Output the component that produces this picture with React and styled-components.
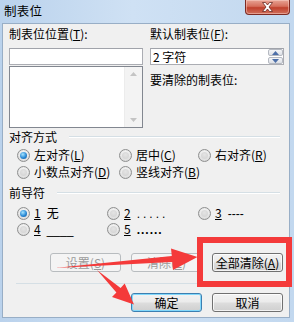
import React from 'react';
import styled, { createGlobalStyle } from 'styled-components';

const GlobalStyle = createGlobalStyle`
  html, body {
    margin: 0;
    padding: 0;
    background: #fff;
  }
`;

const Window = styled.div`
  position: relative;
  width: 294px;
  height: 322px;
  box-sizing: border-box;
  padding: 0 4px 4px 2px;
  display: flex;
  flex-direction: column;
  background: linear-gradient(90deg, #bad2ec 0%, #cfe1f4 45%, #c2d8ef 100%);
  font-family: "Noto Sans CJK SC", "Liberation Sans", sans-serif;
  font-size: 12px;
  color: #000;
  overflow: hidden;
`;

const TitleBar = styled.div`
  height: 23px;
  display: flex;
  justify-content: space-between;
  align-items: flex-start;
`;

const Title = styled.div`
  padding: 3px 0 0 2px;
  font-size: 12.5px;
  line-height: 16px;
  letter-spacing: 0.3px;
`;

const CloseButton = styled.div`
  width: 45px;
  height: 15px;
  box-sizing: border-box;
  border: 1px solid #7d2a22;
  border-top: none;
  border-radius: 0 0 4px 4px;
  background: linear-gradient(180deg, #e7a394 0%, #d66f5c 45%, #c0402c 55%, #d0705c 100%);
  box-shadow: inset 0 0 0 1px rgba(255, 220, 210, 0.45);
  display: flex;
  align-items: center;
  justify-content: center;
`;

const Body = styled.div`
  flex: 1;
  box-sizing: border-box;
  border: 1px solid #98aec6;
  background: #f0f0f0;
  padding: 3px 5px 0 6px;
  display: flex;
  flex-direction: column;
`;

const TopGrid = styled.div`
  display: grid;
  grid-template-columns: 134px 134px;
  column-gap: 7px;
`;

const Column = styled.div`
  display: flex;
  flex-direction: column;
`;

const Label = styled.div`
  height: 14px;
  line-height: 14px;
  white-space: nowrap;
  margin-top: ${(p) => p.$mt || 0}px;
`;

const Mn = styled.span`
  text-decoration: underline;
  text-underline-offset: 1px;
`;

const TextBox = styled.div`
  margin-top: 7px;
  height: 17px;
  box-sizing: border-box;
  border: 1px solid #abadb3;
  border-top-color: #a0a3aa;
  background: #fff;
  display: flex;
  align-items: center;
  padding-left: 2px;
  line-height: 15px;
`;

const SpinText = styled.div`
  flex: 1;
`;

const SpinButtons = styled.div`
  width: 15px;
  height: 15px;
  display: flex;
  flex-direction: column;
  gap: 1px;
`;

const SpinHalf = styled.div`
  flex: 1;
  border: 1px solid #b5b9c1;
  border-radius: 2px;
  background: linear-gradient(180deg, #f4f5f7, #dde0e6);
  display: flex;
  align-items: center;
  justify-content: center;
`;

const ListBox = styled.div`
  margin-top: 1px;
  height: 62px;
  box-sizing: border-box;
  border: 1px solid #828790;
  background: #fff;
  display: flex;
  justify-content: flex-end;
`;

const ScrollBar = styled.div`
  width: 17px;
  background: #f3f3f3;
  border-left: 1px solid #ececec;
  display: flex;
  flex-direction: column;
  justify-content: space-between;
  align-items: center;
  padding: 5px 0;
`;

const GroupHeader = styled.div`
  margin-top: ${(p) => p.$mt}px;
  height: 14px;
  line-height: 14px;
  display: flex;
  align-items: center;
  gap: 12px;
  padding-right: 4px;
`;

const GroupLine = styled.div`
  flex: 1;
  height: 1px;
  background: #d5dfe5;
  border-bottom: 1px solid #fff;
`;

const RadioGrid = styled.div`
  margin-top: ${(p) => p.$mt}px;
  padding-left: 8px;
  display: grid;
  grid-template-columns: ${(p) => p.$cols};
  grid-auto-rows: 14px;
  row-gap: ${(p) => p.$gap}px;
`;

const RadioItem = styled.div`
  display: flex;
  align-items: center;
  gap: 4px;
  white-space: nowrap;
  line-height: 14px;
`;

const RadioDot = styled.span`
  flex: none;
  width: 13px;
  height: 13px;
  box-sizing: border-box;
  border-radius: 50%;
  border: 1px solid #8e8f8f;
  background: radial-gradient(circle at 50% 40%, #ffffff 0%, #ececec 45%, #c9c9c9 100%);
  display: flex;
  align-items: center;
  justify-content: center;

  &::after {
    content: '';
    width: 7px;
    height: 7px;
    border-radius: 50%;
    background: ${(p) =>
      p.$checked
        ? 'radial-gradient(circle at 40% 35%, #a6e4ff 0%, #2a8ad6 55%, #0c4f93 100%)'
        : 'radial-gradient(circle at 50% 40%, #e4e4e4, #d0d0d0)'};
  }
`;

const Leader = styled.span`
  margin-left: 6px;
  font-family: "Liberation Sans", sans-serif;
  letter-spacing: ${(p) => p.$ls || 0}px;
  font-weight: ${(p) => (p.$bold ? 700 : 400)};
`;

const LeaderCjk = styled.span`
  margin-left: 6px;
`;

const ButtonRow = styled.div`
  margin-top: ${(p) => p.$mt}px;
  display: flex;
  justify-content: flex-end;
  gap: 10px;
  padding-right: 1px;
`;

const Button = styled.button`
  width: 71px;
  height: 19px;
  box-sizing: border-box;
  padding: 0;
  border-radius: 3px;
  font-family: "Noto Sans CJK SC", "Liberation Sans", sans-serif;
  font-size: 12px;
  line-height: 15px;
  color: ${(p) => (p.disabled ? '#9a9a9a' : '#000')};
  border: 1px solid ${(p) => (p.disabled ? '#b8bcbf' : p.$default ? '#3c7fb1' : '#707070')};
  background: ${(p) =>
    p.disabled
      ? '#f4f4f4'
      : 'linear-gradient(180deg, #f2f2f2 0%, #ebebeb 48%, #dddddd 52%, #cfcfcf 100%)'};
  box-shadow: ${(p) =>
    p.$default ? 'inset 0 0 0 1px #82d8fb' : p.disabled ? 'none' : 'inset 0 0 0 1px rgba(255,255,255,0.75)'};
`;

const Separator = styled.div`
  margin: 11px -5px 0 7px;
  height: 1px;
  background: #d5dfe5;
`;

const RedBox = styled.div`
  position: absolute;
  left: 197px;
  top: 237px;
  width: 95px;
  height: 50px;
  box-sizing: border-box;
  border: 6px solid #f43a3a;
  pointer-events: none;
`;

const Arrows = styled.svg`
  position: absolute;
  left: 0;
  top: 0;
  pointer-events: none;
`;

const Tri = ({ up }) => (
  <svg width="7" height="4" viewBox="0 0 7 4">
    <path d={up ? 'M0 4 L3.5 0 L7 4 Z' : 'M0 0 L3.5 4 L7 0 Z'} fill="#c4c4c4" />
  </svg>
);

const SpinTri = ({ up }) => (
  <svg width="7" height="4" viewBox="0 0 7 4">
    <path d={up ? 'M0 4 L3.5 0 L7 4 Z' : 'M0 0 L3.5 4 L7 0 Z'} fill="#4d6fa8" />
  </svg>
);

const Radio = ({ checked, children }) => (
  <RadioItem>
    <RadioDot $checked={checked} />
    <span>{children}</span>
  </RadioItem>
);

export default function App() {
  return (
    <>
      <GlobalStyle />
      <Window>
        <TitleBar>
          <Title>制表位</Title>
          <CloseButton>
            <svg width="13" height="10" viewBox="0 0 13 10">
              <path
                d="M1.5 0.5 L4.5 0.5 L6.5 3 L8.5 0.5 L11.5 0.5 L8 5 L11.5 9.5 L8.5 9.5 L6.5 7 L4.5 9.5 L1.5 9.5 L5 5 Z"
                fill="#fff"
                stroke="#6b2a22"
                strokeWidth="0.8"
              />
            </svg>
          </CloseButton>
        </TitleBar>
        <Body>
          <TopGrid>
            <Column>
              <Label>
                制表位位置(<Mn>T</Mn>):
              </Label>
              <TextBox />
              <ListBox>
                <ScrollBar>
                  <Tri up />
                  <Tri />
                </ScrollBar>
              </ListBox>
            </Column>
            <Column>
              <Label>
                默认制表位(<Mn>F</Mn>):
              </Label>
              <TextBox>
                <SpinText>2 字符</SpinText>
                <SpinButtons>
                  <SpinHalf>
                    <SpinTri up />
                  </SpinHalf>
                  <SpinHalf>
                    <SpinTri />
                  </SpinHalf>
                </SpinButtons>
              </TextBox>
              <Label $mt={8}>要清除的制表位:</Label>
            </Column>
          </TopGrid>

          <GroupHeader $mt={2}>
            <span>对齐方式</span>
            <GroupLine />
          </GroupHeader>
          <RadioGrid $mt={4} $gap={3} $cols="102px 79px auto">
            <Radio checked>
              左对齐(<Mn>L</Mn>)
            </Radio>
            <Radio>
              居中(<Mn>C</Mn>)
            </Radio>
            <Radio>
              右对齐(<Mn>R</Mn>)
            </Radio>
            <Radio>
              小数点对齐(<Mn>D</Mn>)
            </Radio>
            <Radio>
              竖线对齐(<Mn>B</Mn>)
            </Radio>
          </RadioGrid>

          <GroupHeader $mt={7}>
            <span>前导符</span>
            <GroupLine />
          </GroupHeader>
          <RadioGrid $mt={6} $gap={2} $cols="90px 91px auto">
            <Radio checked>
              <Mn>1</Mn>
              <LeaderCjk>无</LeaderCjk>
            </Radio>
            <Radio>
              <Mn>2</Mn>
              <Leader $ls={3}>.....</Leader>
            </Radio>
            <Radio>
              <Mn>3</Mn>
              <Leader $ls={0}>----</Leader>
            </Radio>
            <Radio>
              <Mn>4</Mn>
              <Leader>____</Leader>
            </Radio>
            <Radio>
              <Mn>5</Mn>
              <Leader $bold $ls={1}>......</Leader>
            </Radio>
          </RadioGrid>

          <ButtonRow $mt={17}>
            <Button disabled>
              设置(<Mn>S</Mn>)
            </Button>
            <Button disabled>
              清除(<Mn>E</Mn>)
            </Button>
            <Button>
              全部清除(<Mn>A</Mn>)
            </Button>
          </ButtonRow>

          <Separator />

          <ButtonRow $mt={9}>
            <Button $default>确定</Button>
            <Button>取消</Button>
          </ButtonRow>
        </Body>

        <RedBox />
        <Arrows width="294" height="322" viewBox="0 0 294 322">
          <polygon
            points="55,268 171.8,256 171,248.5 197.5,257 173,270 172.3,262"
            fill="#f43a3a"
          />
          <polygon
            points="97,270 120.6,288.1 124.7,283.5 134,304.5 112,297 116.4,292.5"
            fill="#f43a3a"
          />
        </Arrows>
      </Window>
    </>
  );
}
